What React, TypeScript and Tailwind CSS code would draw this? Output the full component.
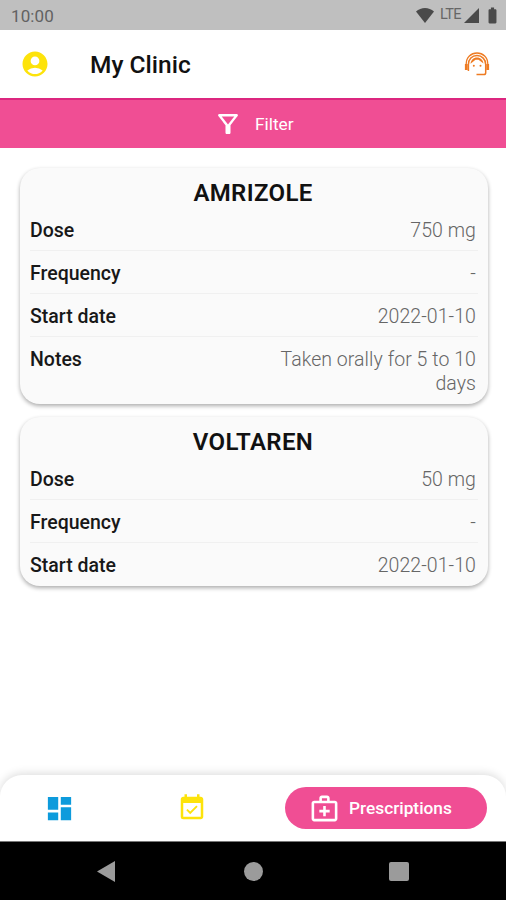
import React from "react";
import {
  MdAccountCircle,
  MdBatteryFull,
  MdDashboard,
  MdEventAvailable,
  MdOutlineFilterAlt,
  MdOutlineMedicalServices,
} from "react-icons/md";

interface IPrescription {
  name: string;
  rows: { label: string; value: string }[];
}

const prescriptions: IPrescription[] = [
  {
    name: "AMRIZOLE",
    rows: [
      { label: "Dose", value: "750 mg" },
      { label: "Frequency", value: "-" },
      { label: "Start date", value: "2022-01-10" },
      { label: "Notes", value: "Taken orally for 5 to 10 days" },
    ],
  },
  {
    name: "VOLTAREN",
    rows: [
      { label: "Dose", value: "50 mg" },
      { label: "Frequency", value: "-" },
      { label: "Start date", value: "2022-01-10" },
    ],
  },
];

function StatusBar() {
  return (
    <div className="flex h-[30px] shrink-0 items-center bg-[#bfbfbf] pr-[4px] pl-[11px] text-[#4a4a4a]">
      <span className="pt-0.5 text-[17px] leading-none tracking-[0.1px] text-[#626262]">10:00</span>
      <div className="ml-auto flex items-center">
        <svg className="h-[15px] w-[18px]" viewBox="0 0 18 15" fill="currentColor">
          <path d="M9 15 0 3.6C5-1.2 13-1.2 18 3.6z" />
        </svg>
        <span className="ml-[6px] w-[22px] pt-px text-[14.5px] leading-none tracking-[-0.6px] text-[#666666]">LTE</span>
        <svg className="ml-[2px] h-[15px] w-[15px]" viewBox="0 0 15 15" fill="currentColor">
          <path d="M15 0v15H0z" />
        </svg>
        <MdBatteryFull className="ml-[4px] h-[19px] w-[19px]" />
      </div>
    </div>
  );
}

// agent face with a headband, fringe and microphone
function SupportIcon() {
  return (
    <svg className="ml-auto h-[26px] w-[26px] text-[#ee7b22]" viewBox="0 0 26 26" fill="none" stroke="currentColor">
      <path d="M2.200 13C2.200 6.500 7 2 13 2s10.800 4.500 10.800 11" strokeWidth="1.300" />
      <path d="M4.400 20v-6.500C4.400 8.300 8 4.600 13 4.600s8.700 3.700 8.700 8.900v8.300c0 1-.8 1.800-1.800 1.800H12.500" strokeWidth="1.500" />
      <path d="M2.300 13v6M23.700 13v6" strokeWidth="2.800" />
      <path d="M6.500 12.800c.4-3.800 3-6.300 6.500-6.300s6 2.500 6.500 6L14.500 8.800 11.500 8.700z" fill="currentColor" stroke="none" />
      <circle cx="9.800" cy="14.800" r="1" fill="currentColor" stroke="none" />
      <circle cx="16.500" cy="14.800" r="1" fill="currentColor" stroke="none" />
    </svg>
  );
}

function Header() {
  return (
    <header className="flex h-[68px] shrink-0 items-center bg-white pr-[16px] pl-[20px]">
      <MdAccountCircle className="h-[30px] w-[30px] text-[#fde30b]" />
      <h1 className="ml-[40px] pt-[2px] text-[24.5px] font-medium text-[#111111]">My Clinic</h1>
      <SupportIcon />
    </header>
  );
}

function PrescriptionCard({ name, rows }: IPrescription) {
  return (
    <section className="rounded-[20px] bg-[#fafafa] px-[10px] shadow-[0_2px_4px_rgba(0,0,0,0.33)]">
      <h2 className="flex h-[40px] items-center justify-center pt-[9px] pr-[2px] text-[24px] font-semibold tracking-[0.35px] text-[#111111]">
        {name}
      </h2>
      {rows.map(({ label, value }, index) => (
        <div
          key={label}
          className={`${
            index < rows.length - 1 ? "border-b border-[#f0f0f0]" : label === "Notes" ? "pb-[8px]" : ""
          } flex min-h-[43px] items-start justify-between pt-[11px] text-[19.5px] leading-[24px]`}
        >
          <span className="font-medium text-[#181818]">{label}</span>
          <span className="mr-[2px] w-[210px] text-right font-light tracking-[0.06px] text-[#666666]">{value}</span>
        </div>
      ))}
    </section>
  );
}

function BottomTabs() {
  return (
    <nav className="flex h-[66px] shrink-0 items-center rounded-t-[22px] bg-white pr-[19px] shadow-[0_-2px_9px_rgba(0,0,0,0.13)]">
      <button type="button" className="ml-[44px]">
        <MdDashboard className="h-[31px] w-[31px] text-[#0d9bdc]" />
      </button>
      <button type="button" className="ml-[102px]">
        <MdEventAvailable className="h-[30px] w-[30px] text-[#fde30b]" />
      </button>
      <button
        type="button"
        className="ml-auto flex h-[42px] w-[202px] items-center rounded-full bg-[#f04e94] pl-[24px] text-white"
      >
        <MdOutlineMedicalServices className="h-[31px] w-[31px]" />
        <span className="ml-[9px] pt-[2px] text-[17.3px] font-medium">Prescriptions</span>
      </button>
    </nav>
  );
}

function SystemNav() {
  return (
    <div className="flex h-[59px] shrink-0 items-center border-t border-[#777777] bg-black pl-[97px] text-[#9b9b9b]">
      <svg className="h-[21px] w-[18px]" viewBox="0 0 18 21" fill="currentColor">
        <path d="M18 0v21L0 10.5z" />
      </svg>
      <span className="ml-[129px] h-[19px] w-[19px] rounded-full bg-[#9b9b9b]" />
      <span className="ml-[126px] h-[19px] w-[20px] rounded-[2px] bg-[#9b9b9b]" />
    </div>
  );
}

export default function App() {
  return (
    <div className="flex h-[900px] w-[506px] flex-col overflow-hidden bg-white font-['Roboto',sans-serif]">
      <StatusBar />
      <Header />
      <button
        type="button"
        className="flex h-[50px] w-full shrink-0 items-center border-t-2 border-[#dc267f] bg-[#f04e94] pl-[213px] text-white"
      >
        <MdOutlineFilterAlt className="h-[30px] w-[30px]" />
        <span className="ml-[12px] pt-px text-[17.3px]">Filter</span>
      </button>
      <main className="flex flex-1 flex-col gap-[13px] pt-[20px] pr-[18px] pl-[20px]">
        {prescriptions.map((prescription) => (
          <PrescriptionCard key={prescription.name} {...prescription} />
        ))}
      </main>
      <BottomTabs />
      <SystemNav />
    </div>
  );
}
